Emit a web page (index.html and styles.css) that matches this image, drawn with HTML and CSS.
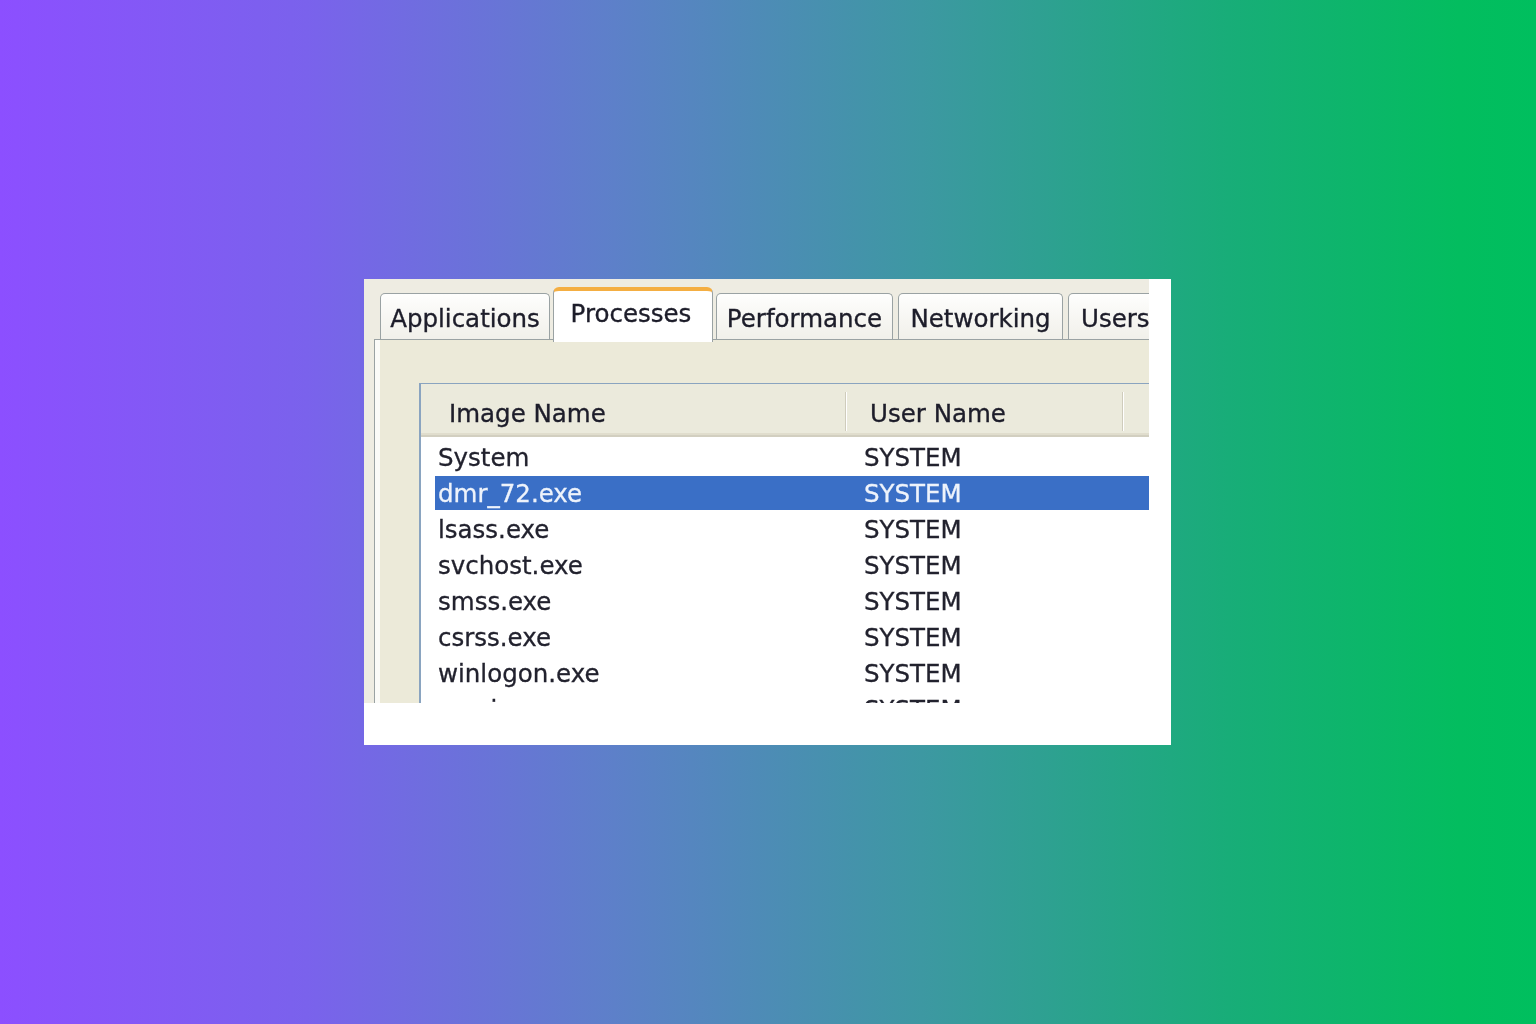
FILE: index.html
```html
<!DOCTYPE html>
<html>
<head>
<meta charset="utf-8">
<title>Task Manager - Processes</title>
<link rel="stylesheet" href="styles.css">
</head>
<body>
<div class="stage">
  <div class="card">
    <div class="viewport">
      <div class="tabs">
        <div class="tab tab-apps">Applications</div>
        <div class="tab tab-proc selected">Processes</div>
        <div class="tab tab-perf">Performance</div>
        <div class="tab tab-net">Networking</div>
        <div class="tab tab-users">Users</div>
      </div>
      <div class="panel">
        <div class="list">
          <div class="header">
            <div class="hcell hcell-name">Image Name</div>
            <div class="hsep"></div>
            <div class="hcell hcell-user">User Name</div>
            <div class="hsep"></div>
            <div class="hcell hcell-rest"></div>
          </div>
          <div class="rows">
            <div class="row"><span class="c1">System</span><span class="c2">SYSTEM</span></div>
            <div class="row selected"><span class="c1">dmr_72.exe</span><span class="c2">SYSTEM</span></div>
            <div class="row"><span class="c1">lsass.exe</span><span class="c2">SYSTEM</span></div>
            <div class="row"><span class="c1">svchost.exe</span><span class="c2">SYSTEM</span></div>
            <div class="row"><span class="c1">smss.exe</span><span class="c2">SYSTEM</span></div>
            <div class="row"><span class="c1">csrss.exe</span><span class="c2">SYSTEM</span></div>
            <div class="row"><span class="c1">winlogon.exe</span><span class="c2">SYSTEM</span></div>
            <div class="row"><span class="c1">services.exe</span><span class="c2">SYSTEM</span></div>
          </div>
        </div>
      </div>
    </div>
  </div>
</div>
</body>
</html>
```

FILE: styles.css
```css
html, body {
  margin: 0;
  padding: 0;
}

body {
  width: 1536px;
  height: 1024px;
  overflow: hidden;
  background: linear-gradient(90deg, #8c4fff 0%, #7a62ec 20%, #5d80c9 40%, #3d98a2 60%, #18ad78 80%, #03bd5f 95%, #00bf5e 100%);
  font-family: "DejaVu Sans", Verdana, sans-serif;
}

.stage {
  box-sizing: border-box;
  height: 1024px;
  padding: 279px 0 0 364px;
}

.card {
  width: 807px;
  height: 466px;
  box-sizing: border-box;
  background: #ffffff;
  padding: 0 22px 42px 0;
}

.viewport {
  width: 785px;
  height: 424px;
  box-sizing: border-box;
  overflow: hidden;
  background: #eeece2;
  padding: 8px 0 0 10px;
  filter: blur(0.45px);
}

/* tabs */
.tabs {
  display: flex;
  align-items: flex-end;
  gap: 5px;
  height: 52px;
  padding-left: 6px;
}

.tab {
  flex: none;
  box-sizing: border-box;
  height: 46px;
  border: 1px solid #9aa2a3;
  border-bottom: none;
  border-radius: 5px 5px 0 0;
  background: linear-gradient(#fefefd, #f1f0ea);
  color: #1d1d2a;
  font-size: 24.5px;
  line-height: 44px;
  padding-top: 3px;
  text-align: center;
  white-space: nowrap;
  overflow: hidden;
  -webkit-text-stroke: 0.35px #1d1d2a;
}

.tab-apps { width: 170px; }
.tab-proc { width: 156px; }
.tab-perf { width: 177px; }
.tab-net { width: 165px; }
.tab-users { width: 100px; text-align: left; padding-left: 12px; }

.tab.selected {
  position: relative;
  z-index: 1;
  width: 160px;
  height: 55px;
  margin: 0 -2px -3px;
  background: #ffffff;
  border-top: 4px solid #f4ae42;
  border-radius: 6px 6px 0 0;
  line-height: 46px;
  padding-top: 0;
  padding-right: 4px;
}

/* panel */
.panel {
  box-sizing: border-box;
  width: 900px;
  height: 500px;
  border-top: 1px solid #9aa2a3;
  border-left: 1px solid #9aa2a3;
  background: #ecead9;
  box-shadow: inset 5px 0 0 #fbfbf8;
  padding: 43px 0 0 44px;
}

.list {
  box-sizing: border-box;
  width: 820px;
  height: 460px;
  border-top: 1px solid #8aa4c0;
  border-left: 2px solid #8aa4c0;
  background: #ffffff;
}

.header {
  display: flex;
  align-items: center;
  box-sizing: border-box;
  height: 53px;
  padding-top: 6px;
  background: #ebeadc;
  box-shadow: inset 0 -2px 0 #d2cfc0, inset 0 -4px 0 #e0ddcd;
  color: #1d1d2a;
  font-size: 24.5px;
  -webkit-text-stroke: 0.35px #1d1d2a;
}

.hcell {
  flex: none;
  box-sizing: border-box;
  white-space: nowrap;
}

.hcell-name { width: 424px; padding-left: 28px; }
.hcell-user { width: 275px; padding-left: 23px; }
.hcell-rest { flex: 1; }

.hsep {
  flex: none;
  align-self: stretch;
  width: 2px;
  margin: 2px 0 6px;
  border-left: 1px solid #cfccbc;
  border-right: 1px solid #ffffff;
  box-sizing: border-box;
}

.rows {
  padding-top: 3px;
}

.row {
  display: flex;
  align-items: center;
  height: 34px;
  margin: 0 0 2px 14px;
  color: #22222e;
  font-size: 24.5px;
  white-space: nowrap;
  -webkit-text-stroke: 0.3px #22222e;
}

.row .c1 {
  box-sizing: border-box;
  width: 429px;
  padding-left: 3px;
}

.row .c2 {
  flex: 1;
}

.row.selected {
  background: #3a6fc6;
  color: #eef3fb;
  -webkit-text-stroke: 0.3px #eef3fb;
}
```
